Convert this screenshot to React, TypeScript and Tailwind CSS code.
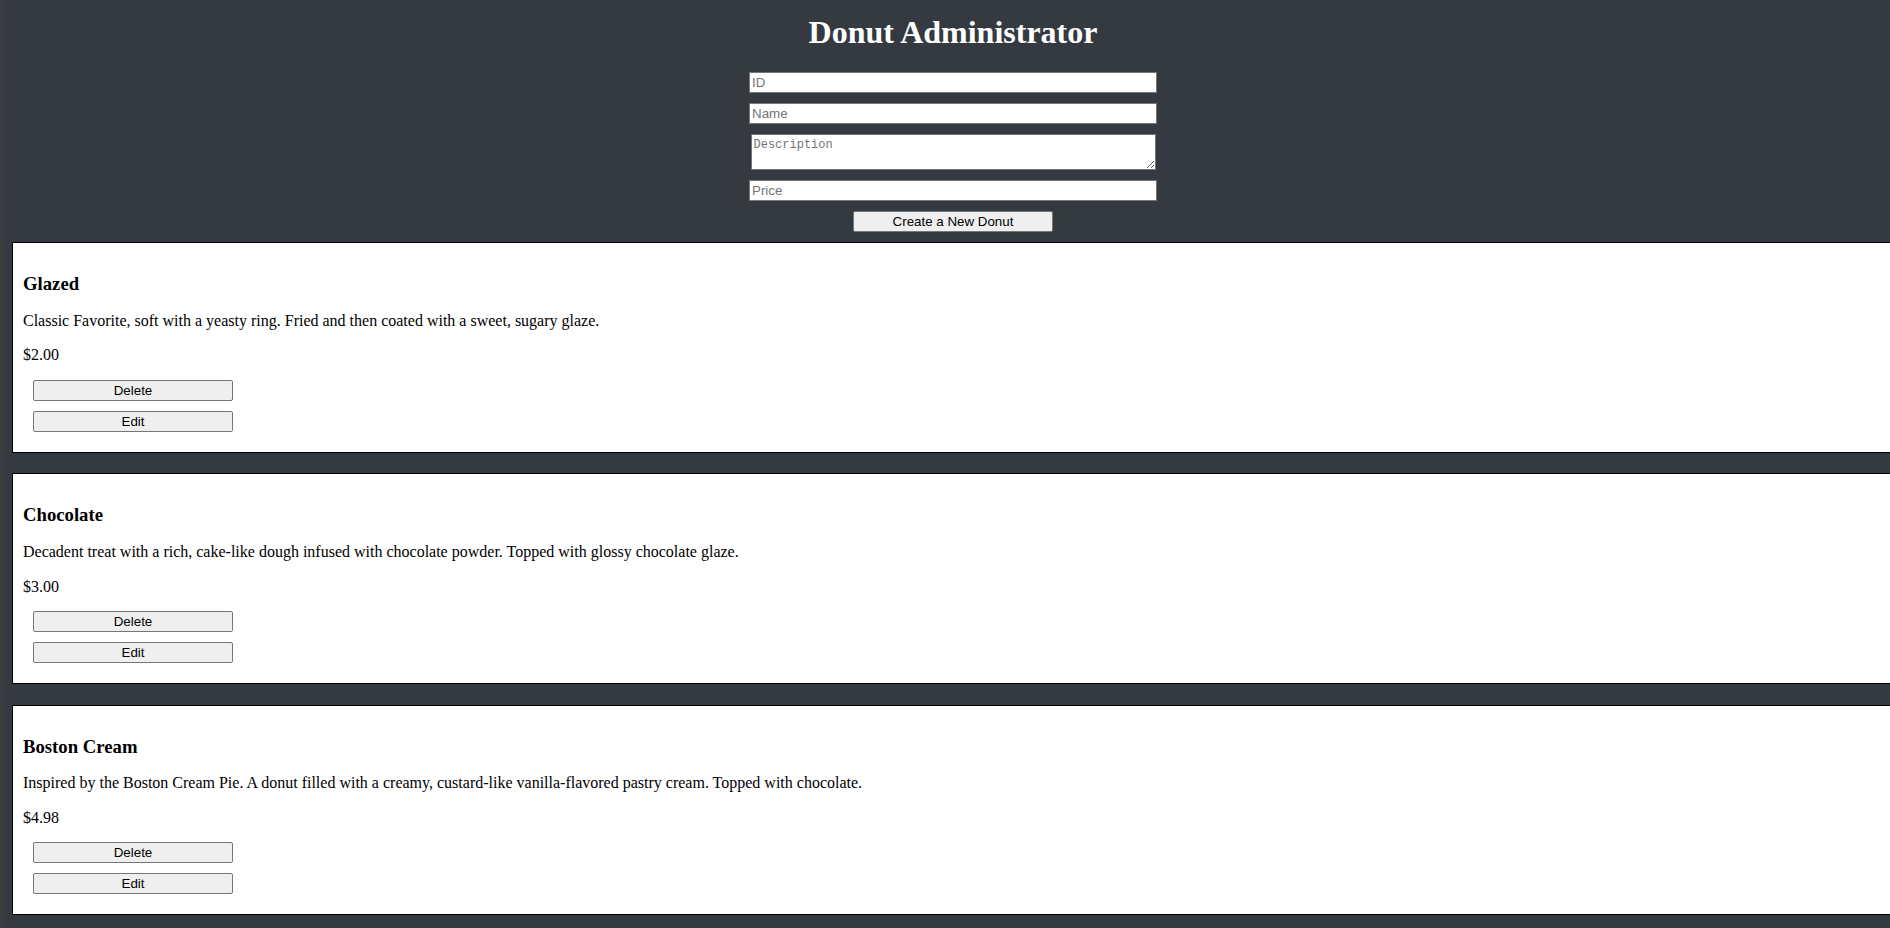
import { useState } from 'react';

interface Donut {
  id: number;
  name: string;
  description: string;
  price: string;
}

const donuts: Donut[] = [
  {
    id: 1,
    name: 'Glazed',
    description: 'Classic Favorite, soft with a yeasty ring. Fried and then coated with a sweet, sugary glaze.',
    price: '$2.00',
  },
  {
    id: 2,
    name: 'Chocolate',
    description: 'Decadent treat with a rich, cake-like dough infused with chocolate powder. Topped with glossy chocolate glaze.',
    price: '$3.00',
  },
  {
    id: 3,
    name: 'Boston Cream',
    description:
      'Inspired by the Boston Cream Pie. A donut filled with a creamy, custard-like vanilla-flavored pastry cream. Topped with chocolate.',
    price: '$4.98',
  },
];

const fieldClass =
  "block h-[21px] w-[408px] border border-[#767676] bg-white px-[2px] text-[13.33px] leading-[17px] text-black outline-none placeholder:text-[#757575] font-['Liberation_Sans',Arial,sans-serif]";

const buttonClass =
  "block h-[21px] w-[200px] rounded-[2px] border border-[#767676] bg-[#efefef] text-[13.33px] leading-[17px] text-black font-['Liberation_Sans',Arial,sans-serif]";

function DonutCard({ donut }: { donut: Donut }) {
  return (
    <div className="w-[1900px] border border-black bg-white px-[10px] pt-[10px] pb-[20px]">
      <h3 className="mt-[20.2px] text-[18.72px] font-bold leading-[21.5px]">{donut.name}</h3>
      <p className="mt-[17.2px] text-[16px] leading-[18.4px]">{donut.description}</p>
      <p className="mt-[16px] text-[16px] leading-[18.4px]">{donut.price}</p>
      <button className={`${buttonClass} ml-[10px] mt-[15.1px]`}>Delete</button>
      <button className={`${buttonClass} ml-[10px] mt-[10px]`}>Edit</button>
    </div>
  );
}

export default function App() {
  const [form, setForm] = useState({ id: '', name: '', description: '', price: '' });

  return (
    <div className="flex h-[928px] w-[1890px] overflow-hidden bg-[#343a40] font-['Liberation_Serif','Times_New_Roman',serif] text-black">
      <div className="w-[3px] shrink-0 bg-[#3b3b3b]" />
      <div className="flex min-w-0 flex-1 flex-col">
        <div className="flex flex-col items-center pl-[13px]">
          <h1 className="mt-[14px] mb-[21px] text-[32px] font-bold leading-[37px] text-white">Donut Administrator</h1>
          <input
            className={fieldClass}
            placeholder="ID"
            value={form.id}
            onChange={(e) => setForm({ ...form, id: e.target.value })}
          />
          <input
            className={`${fieldClass} mt-[10px]`}
            placeholder="Name"
            value={form.name}
            onChange={(e) => setForm({ ...form, name: e.target.value })}
          />
          <textarea
            className="mt-[10px] block h-[36px] w-[405px] border border-[#767676] bg-white px-[2px] pt-[3px] pb-[1px] text-[12px] leading-[15px] text-black outline-none placeholder:text-[#757575] font-['Liberation_Mono','DejaVu_Sans_Mono',monospace]"
            placeholder="Description"
            value={form.description}
            onChange={(e) => setForm({ ...form, description: e.target.value })}
          />
          <input
            className={`${fieldClass} mt-[10px]`}
            placeholder="Price"
            value={form.price}
            onChange={(e) => setForm({ ...form, price: e.target.value })}
          />
          <button className={`${buttonClass} mt-[10px] mb-[10px]`}>Create a New Donut</button>
        </div>
        <div className="flex flex-col gap-[20.5px] pl-[9px]">
          {donuts.map((d) => (
            <DonutCard key={d.id} donut={d} />
          ))}
        </div>
      </div>
    </div>
  );
}
